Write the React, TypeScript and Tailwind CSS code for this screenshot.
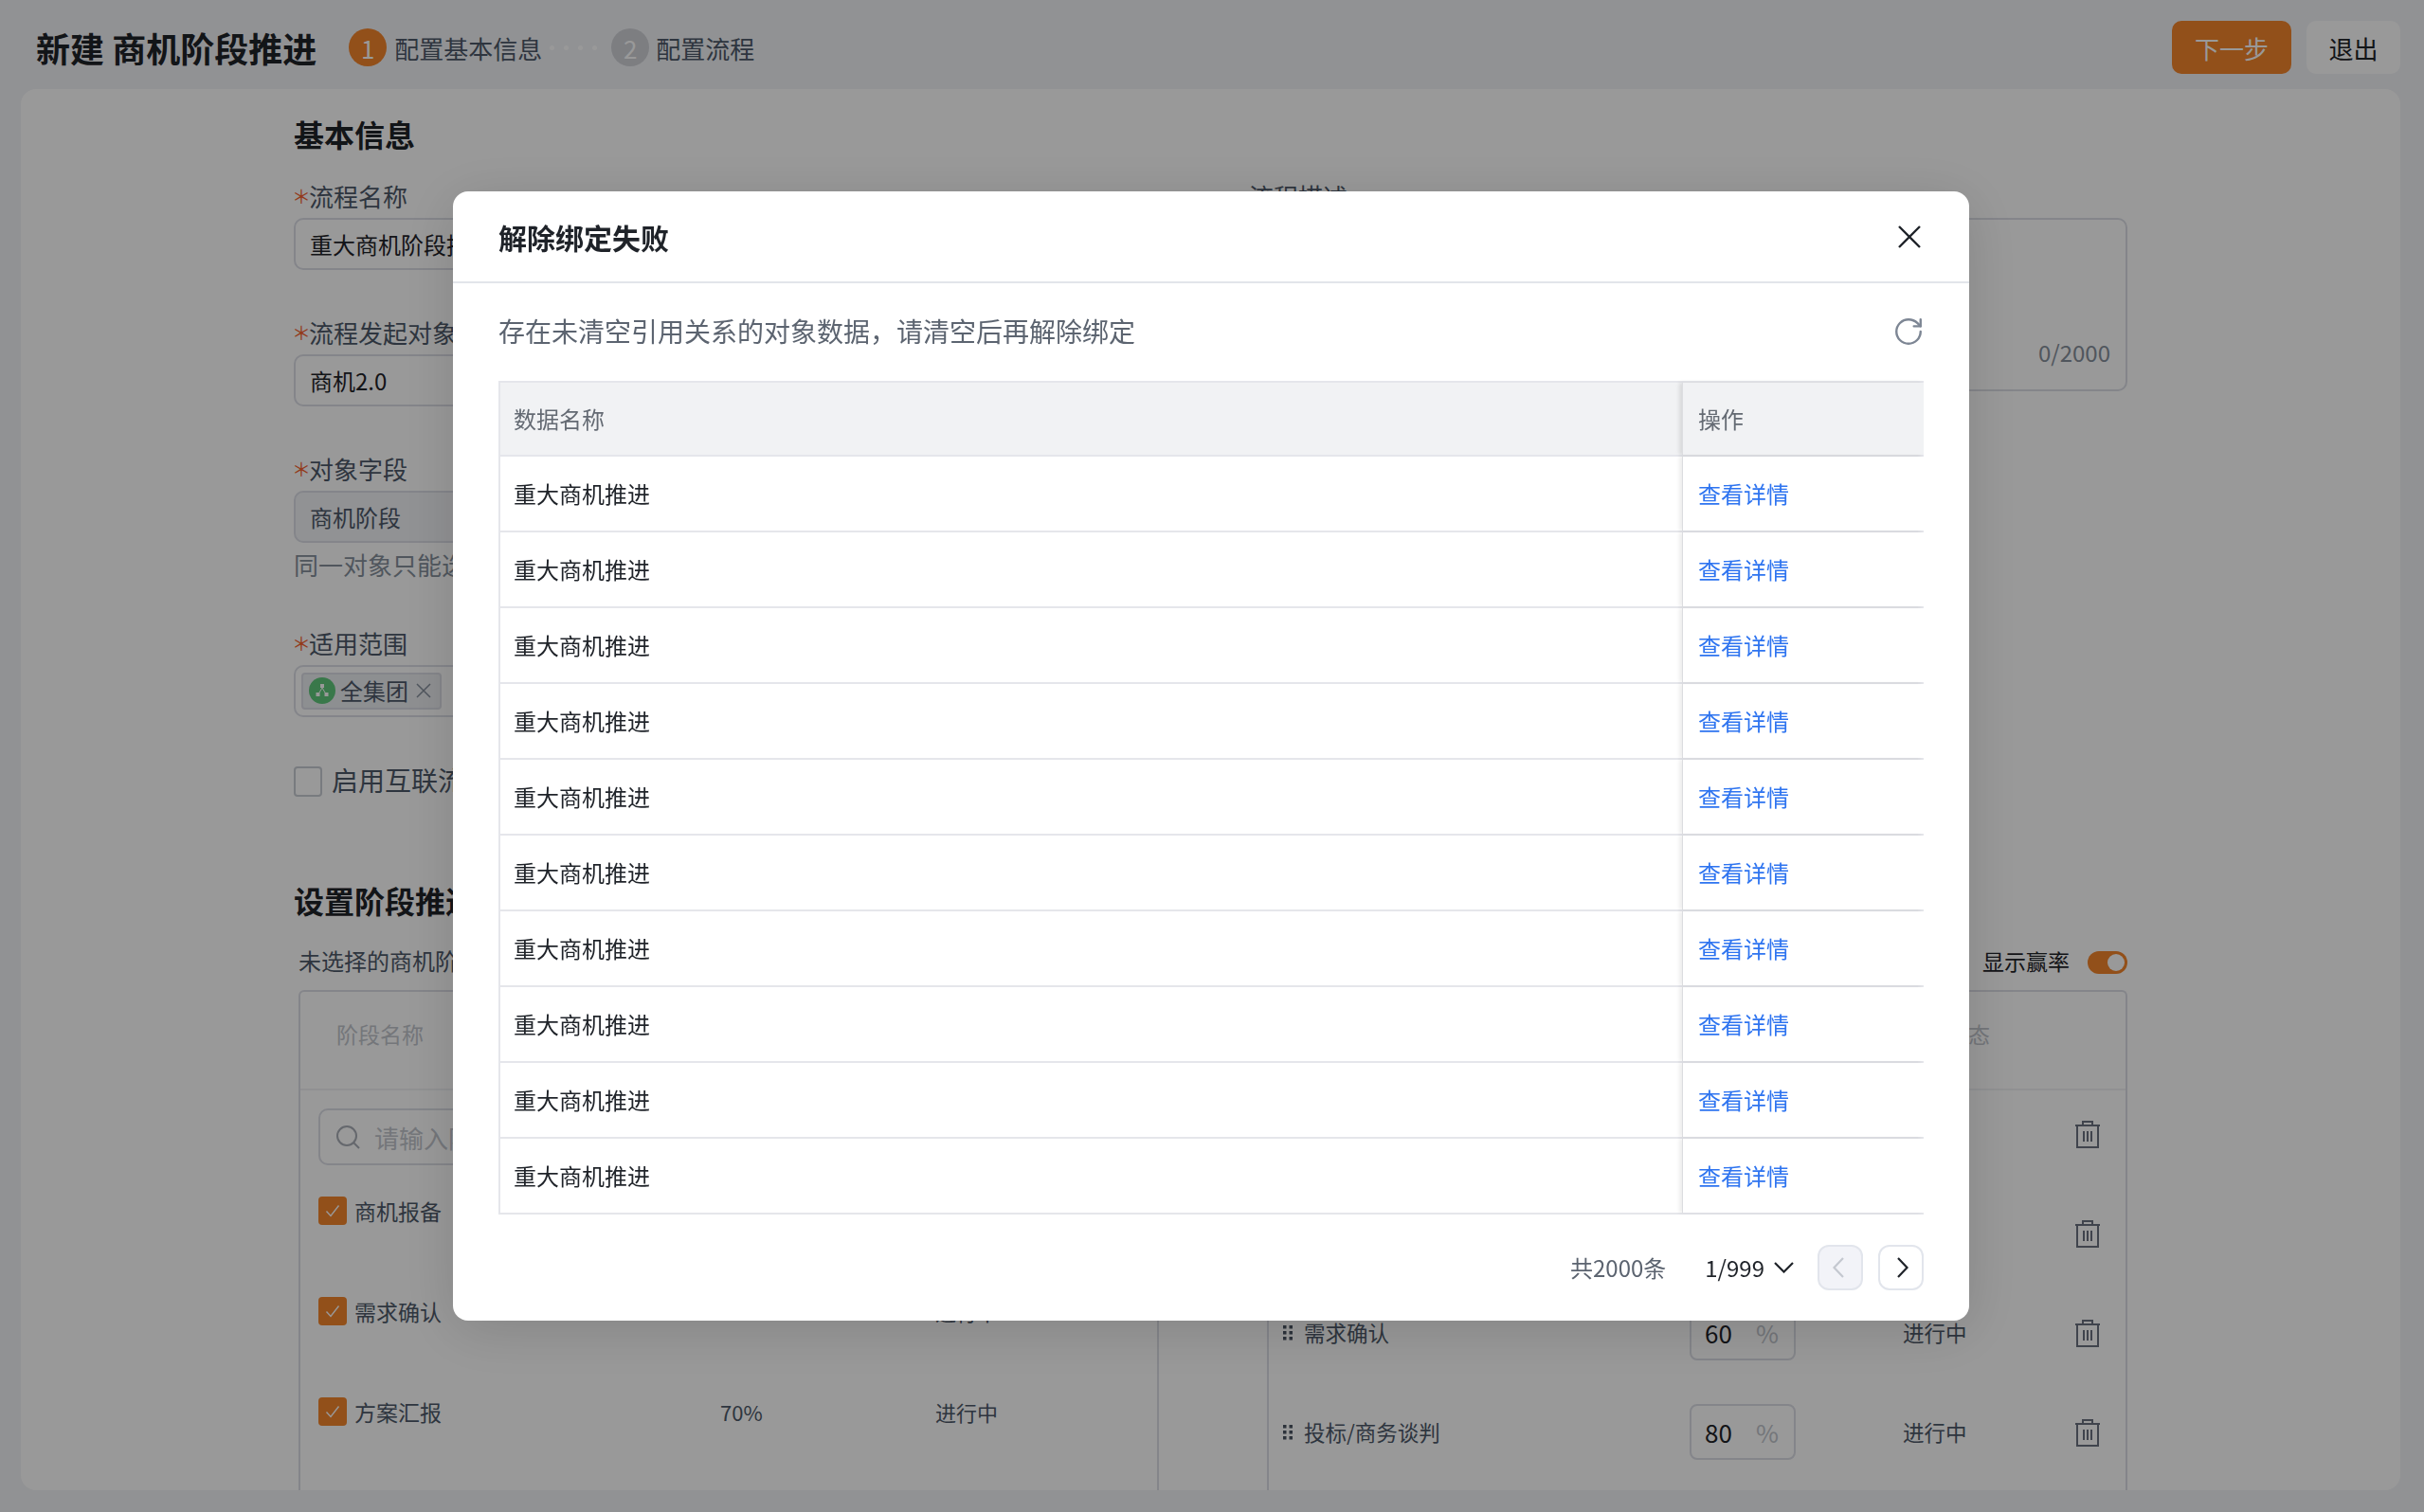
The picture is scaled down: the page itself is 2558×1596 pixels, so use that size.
import { RotateCw } from "lucide-react";

const failedRows = Array.from({ length: 10 }, (_, i) => ({ id: i, name: "重大商机推进" }));

const leftStages = [
  { name: "商机报备", rate: "10%", status: "进行中" },
  { name: "需求确认", rate: "60%", status: "进行中" },
  { name: "方案汇报", rate: "70%", status: "进行中" },
];

const rightStages = [
  { name: "商机报备", rate: "10" },
  { name: "方案汇报", rate: "30" },
  { name: "需求确认", rate: "60" },
  { name: "投标/商务谈判", rate: "80" },
];

function Required() {
  return <span className="inline-block w-4 -translate-x-[2px] text-[20px] text-[#f5622d]">＊</span>;
}

function FieldLabel({ children }: { children: string }) {
  return (
    <div className="flex h-9 items-center pb-[2px] text-[26px] leading-8 text-[#4e5969]">
      <Required />
      {children}
    </div>
  );
}

function CheckMark() {
  return (
    <span className="flex h-[30px] w-[30px] shrink-0 items-center justify-center rounded-[4px] bg-[#f3852c]">
      <svg viewBox="0 0 16 16" className="h-4 w-4" fill="none" stroke="#fff" strokeWidth="1.4">
        <path d="M1.5 8.5 6 13.5 14.5 2.5" />
      </svg>
    </span>
  );
}

function TrashIcon() {
  return (
    <svg viewBox="0 0 28 29" className="mt-[2px] h-[29px] w-7 shrink-0" fill="none" stroke="#6b7280" strokeWidth="2">
      <path d="M9 5V1h10v4M1 5h26M3 5v23h22V5M10 11v11M14 11v11M18 11v11" />
    </svg>
  );
}

function DragHandle() {
  return (
    <svg viewBox="0 0 10 16" className="h-4 w-[10px] shrink-0" fill="#4b5563">
      <rect x="0" y="0" width="3.5" height="3.5" />
      <rect x="6.5" y="0" width="3.5" height="3.5" />
      <rect x="0" y="6" width="3.5" height="3.5" />
      <rect x="6.5" y="6" width="3.5" height="3.5" />
      <rect x="0" y="12" width="3.5" height="3.5" />
      <rect x="6.5" y="12" width="3.5" height="3.5" />
    </svg>
  );
}

function OrgIcon() {
  return (
    <span className="flex h-7 w-7 shrink-0 items-center justify-center rounded-full bg-[#5fc87c]">
      <svg viewBox="0 0 16 16" className="h-4 w-4" fill="#fff">
        <rect x="6" y="1" width="4" height="4" />
        <rect x="1.5" y="10" width="4" height="4" />
        <rect x="10.5" y="10" width="4" height="4" />
        <path d="M7.5 5h1l3 5h-1zM7.5 5h1l-3 5h-1z" />
      </svg>
    </span>
  );
}

function FailedDialog() {
  return (
    <div className="fixed inset-0 flex items-center justify-center bg-black/40 pr-[2px]">
      <div className="flex h-[1192px] w-[1600px] flex-col rounded-[16px] bg-white shadow-[0_10px_60px_rgba(0,0,0,0.14)]">
        <div className="flex h-[97px] shrink-0 items-center justify-between border-b-2 border-[#e2e5ea] pl-[48px] pr-[51px]">
          <h2 className="text-[30px] font-bold leading-10 text-[#1f2329]">解除绑定失败</h2>
          <svg viewBox="0 0 24 24" className="h-6 w-6" fill="none" stroke="#1f2329" strokeWidth="2.4">
            <path d="M1 1 23 23M23 1 1 23" />
          </svg>
        </div>
        <div className="flex flex-1 flex-col pl-[48px] pr-[48px]">
          <div className="mt-[30px] flex h-10 items-center justify-between">
            <p className="text-[28px] leading-10 text-[#5c6470]">
              存在未清空引用关系的对象数据，请清空后再解除绑定
            </p>
            <RotateCw size={34} strokeWidth={1.7} className="-mr-px mt-[2px] text-[#7d8694]" />
          </div>
          <div className="mt-[33px] border-l-2 border-t-2 border-[#e5e6eb]">
            <div className="flex h-[78px] border-b-2 border-[#e5e6eb] bg-[#f1f2f4] text-[24px] text-[#646a73]">
              <div className="flex w-[1247px] items-center pl-[14px]">数据名称</div>
              <div className="flex flex-1 items-center border-l border-[#dcdde0] pl-[16px] shadow-[-3px_0_4px_rgba(0,0,0,0.1)]">
                操作
              </div>
            </div>
            {failedRows.map((row) => (
              <div key={row.id} className="flex h-[80px] border-b-2 border-[#e5e6eb] text-[24px]">
                <div className="flex w-[1247px] items-center pl-[14px] text-[#1f2329]">{row.name}</div>
                <div className="flex flex-1 items-center border-l border-[#dcdde0] pl-[16px] text-[#2e74f0] shadow-[-3px_0_4px_rgba(0,0,0,0.07)]">
                  查看详情
                </div>
              </div>
            ))}
          </div>
          <div className="mt-[32px] flex h-12 items-center justify-end text-[24px]">
            <span className="text-[#5c6470]">共2000条</span>
            <span className="ml-[41px] text-[#1f2329]">1/999</span>
            <svg viewBox="0 0 21 12" className="ml-[10px] h-3 w-[21px]" fill="none" stroke="#1f2329" strokeWidth="2.2">
              <path d="M1 1 10.5 10.5 20 1" />
            </svg>
            <button className="ml-[25px] flex h-12 w-12 items-center justify-center rounded-[12px] border-2 border-[#e2e5ec] bg-[#f2f3f8] pr-1">
              <svg viewBox="0 0 12 22" className="h-[22px] w-3" fill="none" stroke="#c4c8d0" strokeWidth="2.2">
                <path d="M11 1 1.5 11 11 21" />
              </svg>
            </button>
            <button className="ml-4 flex h-12 w-12 items-center justify-center rounded-[12px] border-2 border-[#e2e5ec] bg-white pl-1">
              <svg viewBox="0 0 12 22" className="h-[22px] w-3" fill="none" stroke="#1f2329" strokeWidth="2.2">
                <path d="M1 1 10.5 11 1 21" />
              </svg>
            </button>
          </div>
        </div>
      </div>
    </div>
  );
}

export default function App() {
  return (
    <div className="relative flex h-[1596px] w-[2558px] flex-col overflow-hidden bg-[#f2f3f7] [font-family:'Noto_Sans_CJK_SC',sans-serif]">
      <header className="flex h-[94px] shrink-0 items-center pl-[38px] pr-[25px] pt-[6px]">
        <h1 className="text-[36px] font-bold leading-[50px] text-[#1f2329]">新建 商机阶段推进</h1>
        <div className="ml-[34px] flex items-center text-[26px] text-[#4e5969]">
          <span className="flex h-10 w-10 items-center justify-center rounded-full bg-[#f3852c] text-white">1</span>
          <span className="ml-2">配置基本信息</span>
          <div className="ml-[8px] flex w-[50px] justify-between">
            <i className="h-[5px] w-[5px] rounded-full bg-white" />
            <i className="h-[5px] w-[5px] rounded-full bg-white" />
            <i className="h-[5px] w-[5px] rounded-full bg-white" />
            <i className="h-[5px] w-[5px] rounded-full bg-white" />
          </div>
          <span className="ml-[15px] flex h-10 w-10 items-center justify-center rounded-full bg-[#d0d2d8] text-white">2</span>
          <span className="ml-[7px]">配置流程</span>
        </div>
        <div className="ml-auto flex items-center gap-4">
          <button className="h-14 w-[126px] rounded-[10px] bg-[#f3852c] text-[26px] text-white">下一步</button>
          <button className="h-14 w-[99px] rounded-[10px] bg-white text-[26px] text-[#1f2329]">退出</button>
        </div>
      </header>

      <main className="ml-[22px] h-[1479px] w-[2511px] overflow-hidden rounded-[16px] bg-white pl-[288px] pr-[288px] pt-[25px]">
        <h2 className="text-[32px] font-bold leading-[44px] text-[#1f2329]">基本信息</h2>
        <div className="mt-[27px] grid grid-cols-[917px_927px] gap-x-[91px]">
          <div className="flex flex-col">
            <FieldLabel>流程名称</FieldLabel>
            <div className="mt-1 flex h-[55px] items-center rounded-[10px] border-2 border-[#dcdee6] pl-[15px] text-[24px] text-[#1f2329]">
              重大商机阶段推进
            </div>
            <div className="mt-[49px]">
              <FieldLabel>流程发起对象</FieldLabel>
            </div>
            <div className="mt-1 flex h-[55px] items-center rounded-[10px] border-2 border-[#dcdee6] pl-[15px] text-[24px] text-[#1f2329]">
              商机2.0
            </div>
            <div className="mt-[49px]">
              <FieldLabel>对象字段</FieldLabel>
            </div>
            <div className="mt-1 flex h-[55px] items-center rounded-[10px] border-2 border-[#dcdee6] bg-[#f2f3f7] pl-[15px] text-[24px] text-[#4e5969]">
              商机阶段
            </div>
            <div className="mt-[5px] h-9 text-[26px] leading-9 text-[#86909c]">同一对象只能选择一个字段</div>
            <div className="mt-[48px]">
              <FieldLabel>适用范围</FieldLabel>
            </div>
            <div className="mt-1 flex h-[55px] items-center rounded-[10px] border-2 border-[#dcdee6] pl-[6px]">
              <span className="flex h-[39px] w-[148px] items-center rounded-[4px] border-2 border-[#dcdee6] bg-[#eceef2] pb-[1px] pl-[6px] text-[24px] text-[#4e5969]">
                <OrgIcon />
                <span className="ml-[5px]">全集团</span>
                <svg viewBox="0 0 16 16" className="ml-2 h-4 w-4" fill="none" stroke="#86909c" strokeWidth="1.5">
                  <path d="M1 1 15 15M15 1 1 15" />
                </svg>
              </span>
            </div>
            <div className="mt-[52px] flex h-8 items-center">
              <span className="h-8 w-[30px] rounded-[4px] border-2 border-[#c9cdd4]" />
              <span className="ml-[10px] pb-[4px] text-[28px] text-[#4e5969]">启用互联流程</span>
            </div>
          </div>
          <div className="flex flex-col">
            <div className="flex h-9 items-center pb-[2px] text-[26px] leading-8 text-[#4e5969]">流程描述</div>
            <div className="mt-1 flex h-[183px] items-end justify-end rounded-[10px] border-2 border-[#dcdee6] pb-[23px] pr-[16px] text-[24px] leading-8 text-[#86909c]">
              0/2000
            </div>
          </div>
        </div>

        <h2 className="mt-[87px] text-[32px] font-bold leading-[44px] text-[#1f2329]">设置阶段推进</h2>
        <div className="mt-[24px] flex h-9 items-center justify-between pl-[5px]">
          <span className="text-[24px] text-[#4e5969]">未选择的商机阶段</span>
          <div className="flex items-center">
            <span className="text-[23px] text-[#1f2329]">显示赢率</span>
            <span className="ml-[19px] mt-1 flex h-6 w-[42px] items-center justify-end rounded-full bg-[#f3852c] pr-[3px]">
              <i className="h-[18px] w-[18px] rounded-full bg-white" />
            </span>
          </div>
        </div>

        <div className="mt-[13px] flex pl-[5px]">
          <section className="h-[600px] w-[908px] shrink-0 rounded-t-[6px] border-x-2 border-t-2 border-[#dcdee6]">
            <div className="flex h-[104px] items-center border-b-2 border-[#f0f1f4] pb-[14px] pl-[38px] text-[23px] text-[#c1c5cc]">
              阶段名称
            </div>
            <div className="pl-[19px] pr-5">
              <div className="mt-[19px] flex h-[60px] items-center rounded-[10px] border-2 border-[#dcdee6] pl-[16px]">
                <svg viewBox="0 0 26 26" className="h-[26px] w-[26px]" fill="none" stroke="#a8adb6" strokeWidth="2">
                  <circle cx="12" cy="12" r="10" />
                  <path d="M19 19 25 25" />
                </svg>
                <span className="ml-[15px] text-[26px] text-[#c1c5cc]">请输入阶段名称</span>
              </div>
              <div className="mt-[31px] flex flex-col gap-[76px]">
                {leftStages.map((stage) => (
                  <div key={stage.name} className="grid h-[30px] grid-cols-[424px_227px_1fr] items-center text-[23px] text-[#4e5969]">
                    <div className="flex items-center gap-2">
                      <CheckMark />
                      <span>{stage.name}</span>
                    </div>
                    <span className="text-[22px]">{stage.rate}</span>
                    <span className="text-[22px]">{stage.status}</span>
                  </div>
                ))}
              </div>
            </div>
          </section>
          <section className="ml-[114px] h-[600px] w-[908px] shrink-0 rounded-t-[6px] border-x-2 border-t-2 border-[#dcdee6]">
            <div className="flex h-[104px] items-center border-b-2 border-[#f0f1f4] pb-[14px] pl-[715px] text-[23px] text-[#c1c5cc]">
              状态
            </div>
            <div className="flex flex-col gap-[46px] pt-[16px]">
              {rightStages.map((stage) => (
                <div key={stage.name} className="flex h-[59px] items-center pl-[15px] text-[22.5px] text-[#4e5969]">
                  <DragHandle />
                  <span className="ml-3 w-[407px] shrink-0">{stage.name}</span>
                  <div className="flex h-[59px] w-[112px] shrink-0 items-center rounded-[8px] border-2 border-[#dcdee6] pl-[14px] pr-[16px] text-[26px] text-[#1f2329]">
                    <span>{stage.rate}</span>
                    <span className="ml-auto text-[#c1c5cc]">%</span>
                  </div>
                  <span className="ml-[113px] w-[181px] shrink-0">进行中</span>
                  <TrashIcon />
                </div>
              ))}
            </div>
          </section>
        </div>
      </main>

      <FailedDialog />
    </div>
  );
}
